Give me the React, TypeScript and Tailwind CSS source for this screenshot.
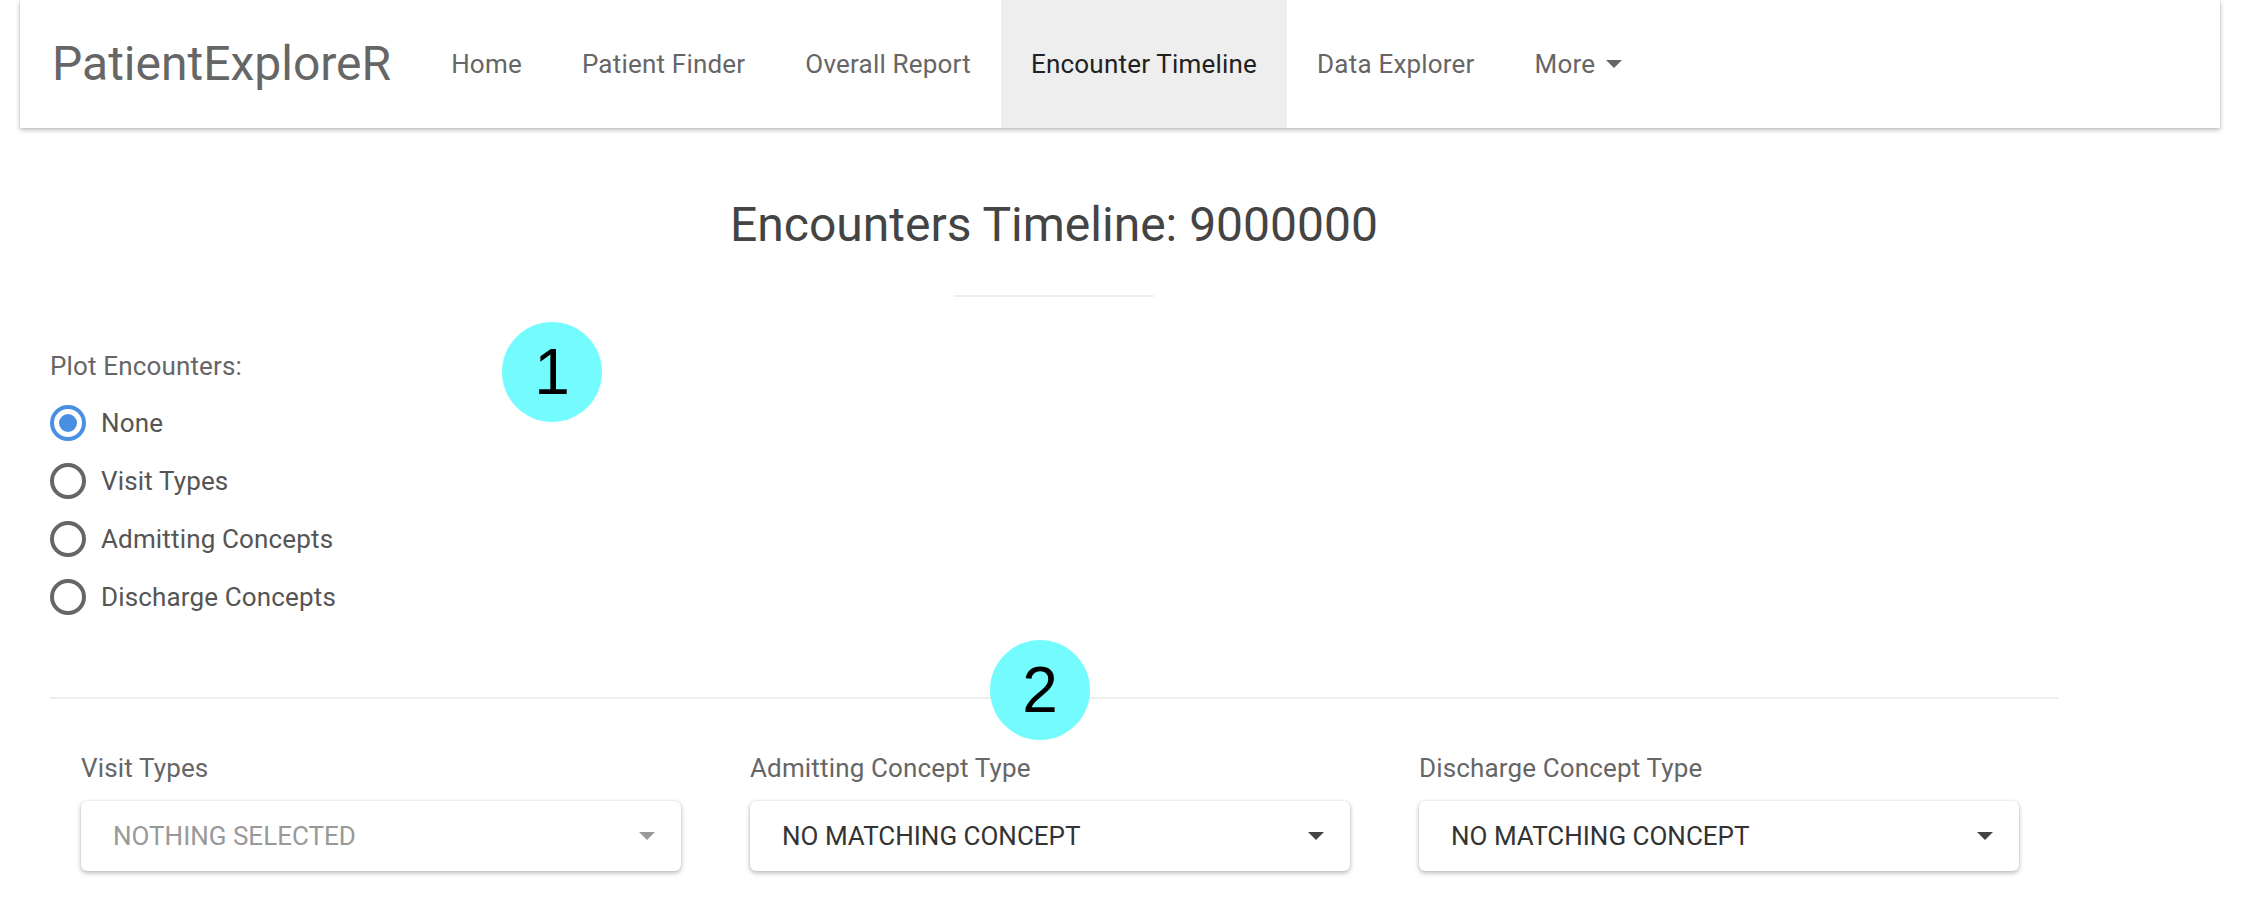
import React, { useState } from 'react';

// ─── Data ──────────────────────────────────────────────────────────────────────

const NAV_ITEMS = ['Home', 'Patient Finder', 'Overall Report', 'Encounter Timeline', 'Data Explorer'];
const PLOT_OPTIONS = ['None', 'Visit Types', 'Admitting Concepts', 'Discharge Concepts'];

const SELECTS = [
  { label: 'Visit Types', value: 'NOTHING SELECTED', placeholder: true },
  { label: 'Admitting Concept Type', value: 'NO MATCHING CONCEPT', placeholder: false },
  { label: 'Discharge Concept Type', value: 'NO MATCHING CONCEPT', placeholder: false },
];

// ─── Small pieces ──────────────────────────────────────────────────────────────

const Caret: React.FC<{ color: string }> = ({ color }) => (
  <svg width="16" height="8" viewBox="0 0 16 8" className="shrink-0">
    <polygon points="0,0 16,0 8,8" fill={color} />
  </svg>
);

const Badge: React.FC<{ n: string; className: string }> = ({ n, className }) => (
  <div
    className={`absolute w-[100px] h-[100px] rounded-full bg-[#74fbfd] flex items-center justify-center text-[64px] leading-none text-black font-['Liberation_Sans',Arial,sans-serif] ${className}`}
  >
    {n}
  </div>
);

const Radio: React.FC<{ label: string; checked: boolean; onSelect: () => void }> = ({ label, checked, onSelect }) => (
  <label className="h-[58px] flex items-center gap-[15px] cursor-pointer" onClick={onSelect}>
    <span
      className={`w-[36px] h-[36px] rounded-full border-[4px] flex items-center justify-center ${
        checked ? 'border-[#4a90e2]' : 'border-[#666666]'
      }`}
    >
      {checked && <span className="w-[18px] h-[18px] rounded-full bg-[#4a90e2]" />}
    </span>
    <span className="text-[26px] leading-[36px] tracking-[0.15px] text-[#555555]">{label}</span>
  </label>
);

// ─── App ───────────────────────────────────────────────────────────────────────

export default function App() {
  const [plot, setPlot] = useState('None');

  return (
    <div className="relative min-h-screen bg-white font-['Roboto','Noto_Sans',sans-serif] overflow-hidden">
      {/* Navbar */}
      <nav className="ml-[20px] w-[2200px] h-[128px] bg-white flex items-stretch shadow-[0_2px_5px_rgba(0,0,0,0.26),0_0_2px_rgba(0,0,0,0.12)]">
        <div className="pl-[32px] pr-[30px] flex items-center text-[48px] text-[#666666]">PatientExploreR</div>
        {NAV_ITEMS.map((item) => {
          const active = item === 'Encounter Timeline';
          return (
            <div
              key={item}
              className={`px-[30px] flex items-center text-[26px] tracking-[0.2px] ${
                active ? 'bg-[#eeeeee] text-[#212121]' : 'text-[#666666]'
              }`}
            >
              {item}
            </div>
          );
        })}
        <div className="px-[30px] flex items-center gap-[11px] text-[26px] tracking-[0.2px] text-[#666666]">
          More
          <Caret color="#666666" />
        </div>
      </nav>

      {/* Content */}
      <main className="ml-[50px] w-[2008px]">
        <h3 className="mt-[73px] text-center text-[48px] leading-[48px] text-[#444444]">
          Encounters Timeline: 9000000
        </h3>
        <div className="mx-auto mt-[46px] w-[200px] h-[2px] bg-[#eeeeee]" />

        <div className="mt-[51px] text-[26px] leading-[36px] tracking-[0.15px] text-[#666666]">Plot Encounters:</div>
        <div className="mt-[10px] flex flex-col">
          {PLOT_OPTIONS.map((opt) => (
            <Radio key={opt} label={opt} checked={plot === opt} onSelect={() => setPlot(opt)} />
          ))}
        </div>

        <div className="mt-[71px] h-[2px] bg-[#eeeeee]" />

        <div className="mt-[51px] grid grid-cols-3 w-[2007px]">
          {SELECTS.map((s) => (
            <div key={s.label} className="pl-[31px]">
              <div className="text-[26px] leading-[36px] tracking-[0.15px] text-[#666666]">{s.label}</div>
              <div className="mt-[15px] w-[600px] h-[70px] rounded-[6px] bg-white flex items-center justify-between pl-[32px] pr-[26px] shadow-[0_2px_5px_rgba(0,0,0,0.28),0_0_2px_rgba(0,0,0,0.1)]">
                <span className={`text-[26px] ${s.placeholder ? 'text-[#999999]' : 'text-[#333333]'}`}>{s.value}</span>
                <Caret color={s.placeholder ? '#999999' : '#444444'} />
              </div>
            </div>
          ))}
        </div>
      </main>

      {/* Annotation markers */}
      <Badge n="1" className="left-[502px] top-[322px]" />
      <Badge n="2" className="left-[990px] top-[640px]" />
    </div>
  );
}
